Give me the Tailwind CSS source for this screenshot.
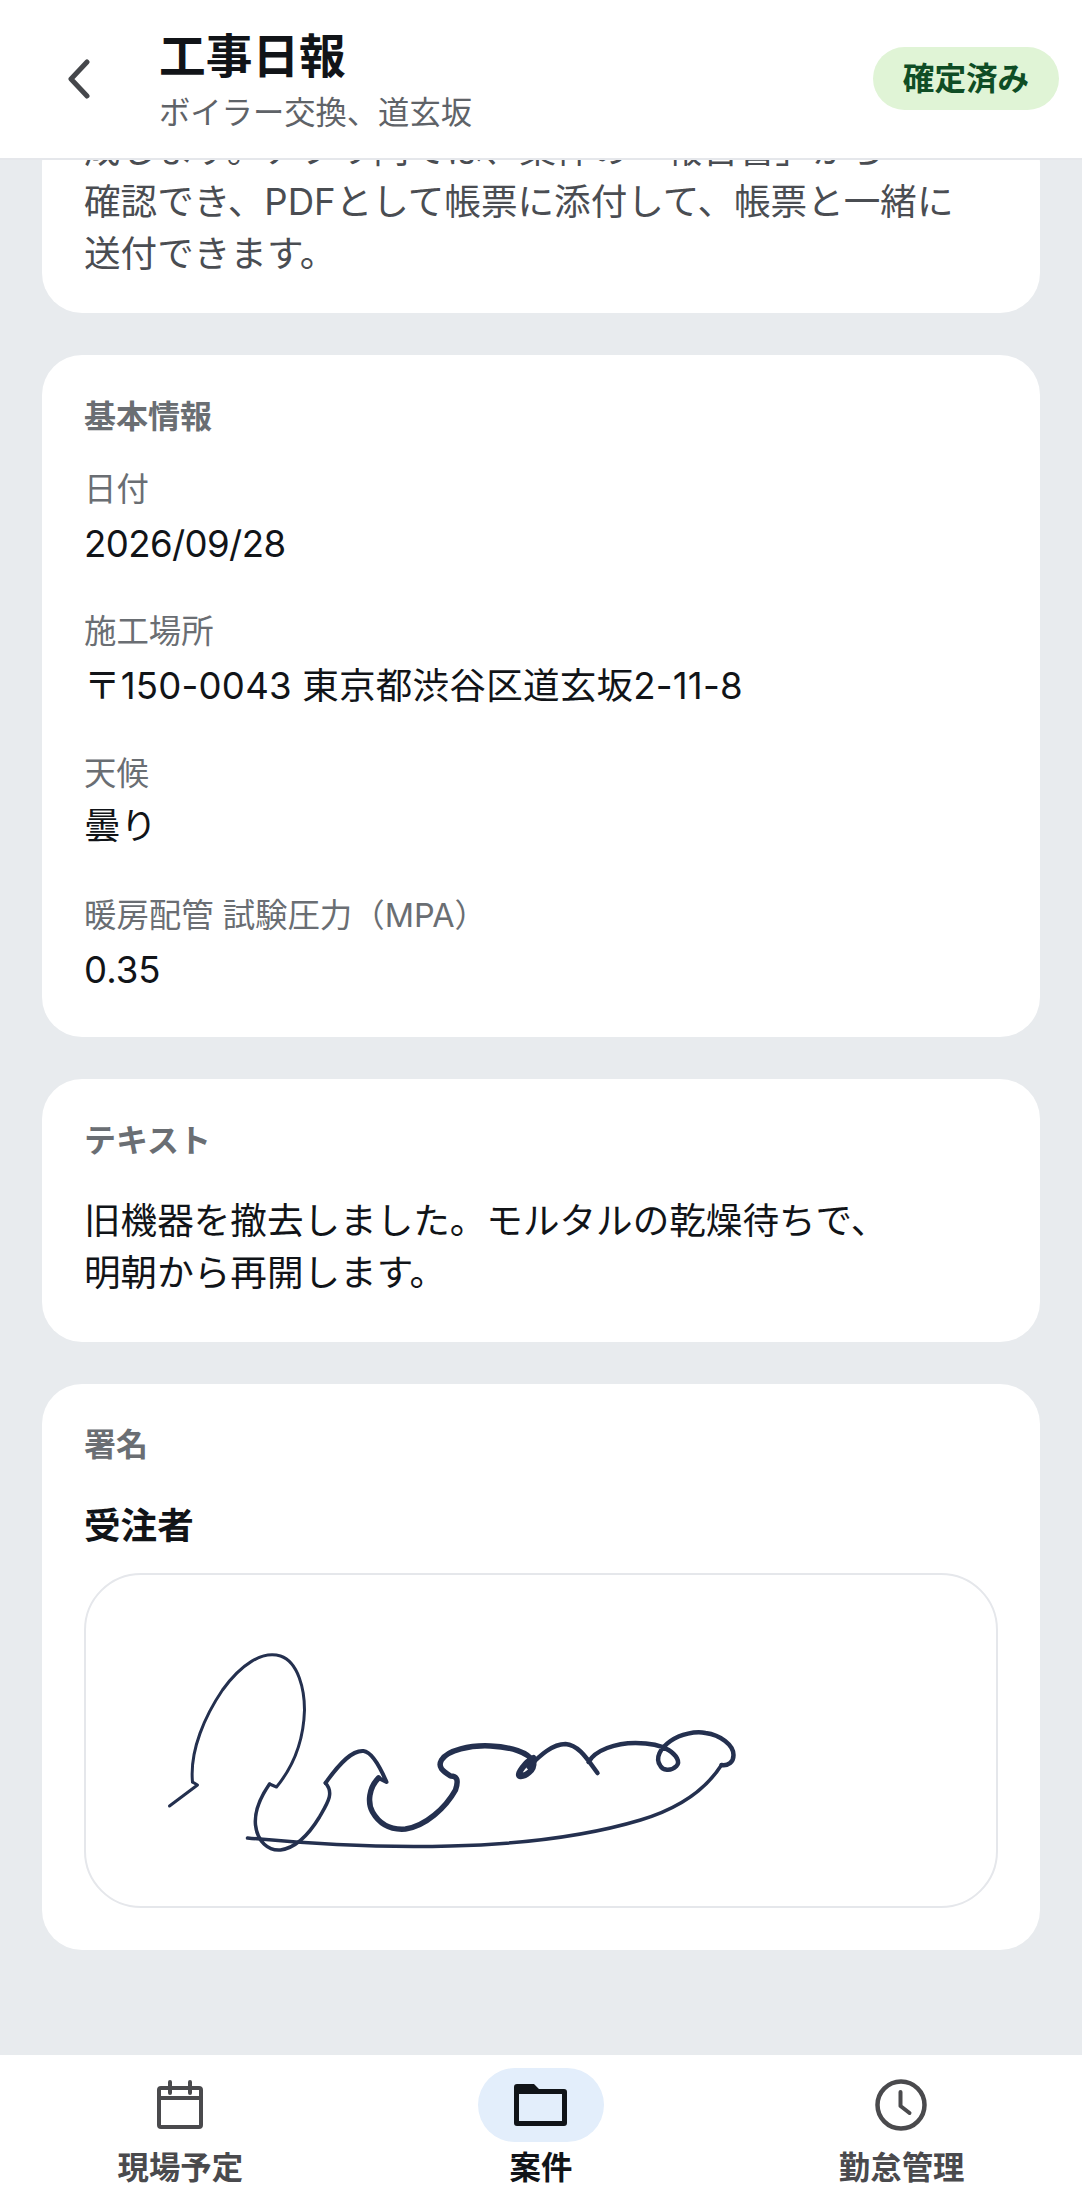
<!DOCTYPE html>
<html lang="ja">
<head>
  <meta charset="UTF-8" />
  <meta name="viewport" content="width=device-width, initial-scale=1" />
  <title>工事日報</title>
  <script src="https://cdn.jsdelivr.net/npm/@tailwindcss/browser@4"></script>
</head>
<body class="bg-[#e8ebee] font-['Inter','Noto_Sans_CJK_JP',sans-serif]">
  <div class="w-[1082px] h-[2202px] flex flex-col overflow-hidden">

    <header class="h-[160px] shrink-0 bg-white border-b-2 border-[#e5e7eb] flex items-start relative z-10">
      <svg class="w-[24px] h-[40px] ml-[67px] mt-[59px]" viewBox="0 0 24 40" fill="none" stroke="#45474b" stroke-width="5" stroke-linecap="round" stroke-linejoin="round"><path d="M20 3 L4 20 L20 37" /></svg>
      <div class="ml-[68px] mt-[26px] flex-1">
        <h1 class="text-[46.7px] leading-[60px] font-bold text-[#111418]">工事日報</h1>
        <p class="text-[31.3px] leading-[42px] mt-[6px] text-[#5f6368]">ボイラー交換、道玄坂</p>
      </div>
      <span class="mt-[47px] mr-[23px] w-[186px] h-[63px] rounded-full bg-[#e0f4d6] text-[#0f4d25] text-[31.6px] font-bold flex items-center justify-center">確定済み</span>
    </header>

    <main class="flex-1 overflow-hidden px-[42px] flex flex-col gap-[42px]">
      <section class="-mt-[36px] bg-white rounded-[40px] px-[42px] pb-[33px] text-[36.6px] leading-[52px] text-[#4a4d52]">
        <p>成します。アプリ内では、案件の「報告書」から</p>
        <p>確認でき、PDFとして帳票に添付して、帳票と一緒に</p>
        <p>送付できます。</p>
      </section>

      <section class="bg-white rounded-[40px] px-[42px] pt-[42px] pb-[41px]">
        <h2 class="text-[32px] leading-[40px] font-bold text-[#6a6e73]">基本情報</h2>
        <dl class="mt-[32px] flex flex-col gap-[41px]">
          <div>
            <dt class="text-[32.4px] leading-[42px] text-[#6a6e73]">日付</dt>
            <dd class="mt-[7px] text-[36.6px] leading-[52px] text-[#111418] tracking-[-0.6px]">2026/09/28</dd>
          </div>
          <div>
            <dt class="text-[32.4px] leading-[42px] text-[#6a6e73]">施工場所</dt>
            <dd class="mt-[7px] text-[36.6px] leading-[52px] text-[#111418] tracking-[0.2px]">〒150-0043 東京都渋谷区道玄坂2-11-8</dd>
          </div>
          <div>
            <dt class="text-[32.4px] leading-[42px] text-[#6a6e73]">天候</dt>
            <dd class="mt-[5px] mb-[2px] text-[36.6px] leading-[52px] text-[#111418]">曇り</dd>
          </div>
          <div>
            <dt class="text-[32.4px] leading-[42px] text-[#6a6e73]">暖房配管 試験圧力（MPA）</dt>
            <dd class="mt-[7px] text-[36.6px] leading-[52px] text-[#111418]">0.35</dd>
          </div>
        </dl>
      </section>

      <section class="bg-white rounded-[40px] px-[42px] pt-[42px] pb-[43px]">
        <h2 class="text-[32px] leading-[40px] font-bold text-[#6a6e73]">テキスト</h2>
        <p class="mt-[34px] text-[36.6px] leading-[52px] text-[#111418]">旧機器を撤去しました。モルタルの乾燥待ちで、<br />明朝から再開します。</p>
      </section>

      <section class="bg-white rounded-[40px] px-[42px] pt-[41px] pb-[42px]">
        <h2 class="text-[32px] leading-[40px] font-bold text-[#6a6e73]">署名</h2>
        <h3 class="mt-[35px] text-[36.6px] leading-[52px] font-bold text-[#111418]">受注者</h3>
        <div class="mt-[21px] h-[335px] rounded-[57px] border-2 border-[#e5e7eb] overflow-hidden">
          <!-- signature, coordinates are page px -->
          <svg class="w-full h-full" viewBox="87 1575 907 331" fill="none" stroke="#24304f" stroke-linecap="round" stroke-linejoin="round">
            <g stroke-width="3">
              <path d="M169 1806 L197 1785 L192 1782" />
              <path d="M192 1782 C189 1750 205 1715 222 1690 C240 1665 262 1650 280 1656 C298 1662 304 1690 304 1710 C303 1745 290 1770 276 1787 L269 1784" />
            </g>
            <path stroke-width="3.5" d="M269 1784 C258 1800 254 1815 255 1825 C257 1842 268 1851 280 1850 C295 1848 308 1835 319 1817 C327 1803 334 1793 325 1783" />
            <path stroke-width="4" d="M325 1783 C340 1762 352 1750 363 1751 C372 1752 380 1768 386 1782 L378 1778" />
            <path stroke-width="5.5" d="M378 1778 C368 1788 367 1803 372 1812 C380 1826 392 1830 405 1829 C425 1826 445 1808 455 1790 C459 1778 455 1776 450 1776 C442 1771 437 1767 441 1760 C447 1750 470 1745 490 1746 C510 1747 528 1752 533 1762" />
            <path stroke-width="6" d="M533 1762 C534 1770 525 1777 519 1776 C516 1774 525 1762 533 1758" />
            <path stroke-width="4.5" d="M528 1767 C540 1755 552 1744 565 1744 C578 1745 586 1758 597 1773 M588 1762 C595 1750 615 1743 635 1743 C650 1743 660 1745 668 1750 C676 1755 680 1762 676 1766 C670 1772 662 1770 660 1766 C654 1758 660 1748 670 1741 C680 1734 695 1731 705 1733 C720 1735 733 1745 733 1755 C733 1762 728 1766 721 1765" />
            <path stroke-width="3.5" d="M721 1765 C705 1790 680 1808 640 1820 C590 1835 530 1844 450 1846 C380 1848 310 1844 247 1838" />
          </svg>
        </div>
      </section>
    </main>

    <nav class="h-[147px] shrink-0 bg-white grid grid-cols-3 text-[31.4px] leading-[40px] font-bold text-[#4a4a4d]">
      <a class="flex flex-col items-center pt-[13px]">
        <span class="h-[74px] flex items-center justify-center">
          <svg class="w-[50px] h-[52px]" viewBox="0 0 50 52" fill="none" stroke="currentColor" stroke-width="4" stroke-linecap="round"><rect x="4" y="9" width="42" height="39" rx="2" /><path d="M4 19 H46" /><path d="M15 3 V14 M35 3 V14" /></svg>
        </span>
        <span class="mt-[6px]">現場予定</span>
      </a>
      <a class="flex flex-col items-center pt-[13px] text-[#111418]">
        <span class="w-[126px] h-[74px] rounded-full bg-[#e3eefb] flex items-center justify-center">
          <svg class="w-[53px] h-[42px]" viewBox="0 0 53 42" fill="currentColor" fill-rule="evenodd"><path d="M3 0 H20 L25 5 H50 a3 3 0 0 1 3 3 V39 a3 3 0 0 1 -3 3 H3 a3 3 0 0 1 -3 -3 V3 a3 3 0 0 1 3 -3 Z M5 10 V37 H48 V10 Z" /></svg>
        </span>
        <span class="mt-[6px]">案件</span>
      </a>
      <a class="flex flex-col items-center pt-[13px]">
        <span class="h-[74px] flex items-center justify-center">
          <svg class="w-[52px] h-[52px] -ml-[2px]" viewBox="0 0 52 52" fill="none" stroke="currentColor" stroke-width="4.5" stroke-linecap="round" stroke-linejoin="round"><circle cx="26" cy="26" r="23.5" /><path stroke-width="4" d="M25.5 13 V27 L34.5 34" /></svg>
        </span>
        <span class="mt-[6px]">勤怠管理</span>
      </a>
    </nav>
  </div>
</body>
</html>
